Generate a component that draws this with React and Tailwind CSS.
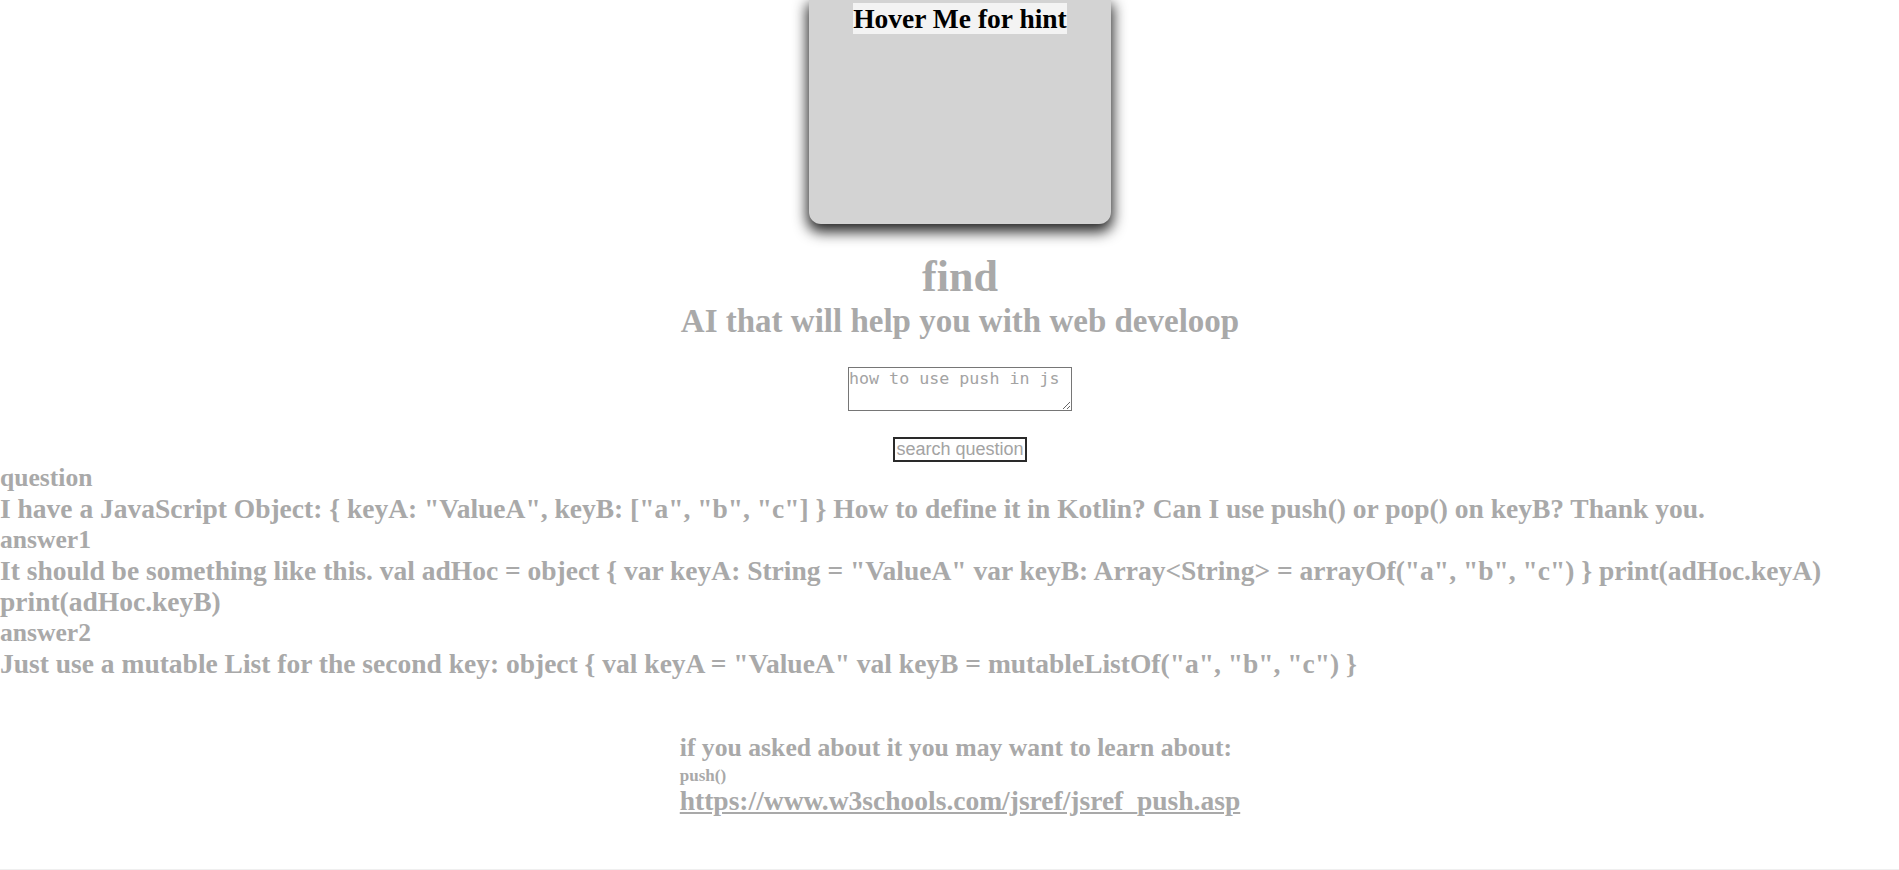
export default function App() {
  const serif = "font-['Liberation_Serif','Times_New_Roman',serif]";

  return (
    <div className="w-full overflow-hidden bg-white">
      <div className={`w-[1920px] ${serif} font-bold text-[#a9a9a9]`}>
        {/* hint card */}
        <div className="flex justify-center">
          <div className="w-[302px] h-[224px] pt-[3px] bg-[#d3d3d3] rounded-b-[12px] shadow-[0_6px_14px_2px_rgba(0,0,0,0.85)] text-center">
            <span className="bg-[#f3f3f3] text-black text-[27.5px] leading-[31px] inline-block">
              Hover Me for hint
            </span>
          </div>
        </div>

        <h1 className="mt-[28px] text-center text-[44px] leading-[50px]">find</h1>
        <h2 className="text-center text-[33px] leading-[38px]">
          AI that will help you with web develoop
        </h2>

        <div className="mt-[27px] flex justify-center">
          <textarea
            placeholder="how to use push in js"
            className="block w-[224px] h-[44px] p-0 pt-px border border-[#767676] font-['DejaVu_Sans_Mono',monospace] font-normal text-[16.67px] leading-[19px] text-black placeholder:text-[#a3a3a3] resize-y"
          />
        </div>

        <div className="mt-[26px] flex justify-center">
          <button className="h-[25px] px-px py-0 border-2 border-[#2a2a2a] bg-white font-['Liberation_Sans',Arial,sans-serif] font-normal text-[18px] leading-[21px] text-[#a3a3a3]">
            search question
          </button>
        </div>

        {/* question + answers */}
        <div className="leading-[31px] text-left">
          <div className="text-[25.6px]">question</div>
          <div className="text-[27.5px]">
            I have a JavaScript Object: {'{'} keyA: "ValueA", keyB: ["a", "b", "c"] {'}'} How to
            define it in Kotlin? Can I use push() or pop() on keyB? Thank you.
          </div>
          <div className="text-[25.6px]">answer1</div>
          <div className="text-[27.5px]">
            It should be something like this. val adHoc = object {'{'} var keyA: String = "ValueA"
            var keyB: Array&lt;String&gt; = arrayOf("a", "b", "c") {'}'} print(adHoc.keyA)
            print(adHoc.keyB)
          </div>
          <div className="text-[25.6px]">answer2</div>
          <div className="text-[27.5px]">
            Just use a mutable List for the second key: object {'{'} val keyA = "ValueA" val keyB =
            mutableListOf("a", "b", "c") {'}'}
          </div>
        </div>

        {/* learn more */}
        <div className="mt-[54px] flex justify-center">
          <div className="text-left">
            <div className="text-[25.7px] leading-[30px]">
              if you asked about it you may want to learn about:
            </div>
            <div className="mt-[3px] text-[17px] leading-[19px]">push()</div>
            <a
              href="#"
              className="block text-[27.5px] leading-[31px] underline text-[#a9a9a9]"
            >
              https://www.w3schools.com/jsref/jsref_push.asp
            </a>
          </div>
        </div>

        <div className="mt-[53px] h-[40px] bg-[#efefef]" />
      </div>
    </div>
  );
}
